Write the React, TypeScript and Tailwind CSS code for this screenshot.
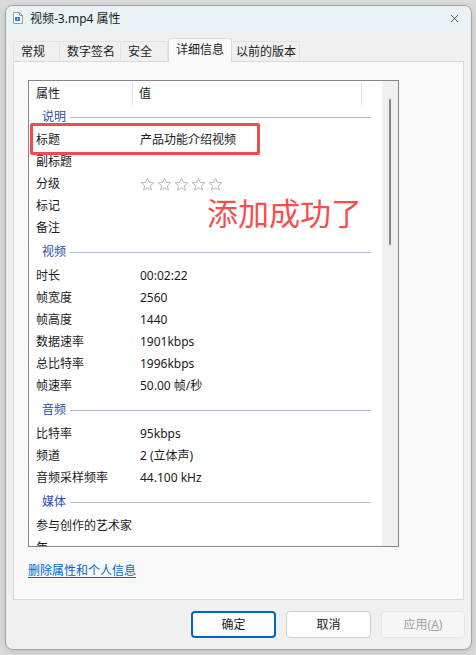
import { X } from 'lucide-react';

type Row = [string, string];

interface Section {
    name: string;
    rows: Row[];
}

const sections: Section[] = [
    {
        name: '说明',
        rows: [
            ['标题', '产品功能介绍视频'],
            ['副标题', ''],
            ['分级', '*'],
            ['标记', ''],
            ['备注', ''],
        ],
    },
    {
        name: '视频',
        rows: [
            ['时长', '00:02:22'],
            ['帧宽度', '2560'],
            ['帧高度', '1440'],
            ['数据速率', '1901kbps'],
            ['总比特率', '1996kbps'],
            ['帧速率', '50.00 帧/秒'],
        ],
    },
    {
        name: '音频',
        rows: [
            ['比特率', '95kbps'],
            ['频道', '2 (立体声)'],
            ['音频采样频率', '44.100 kHz'],
        ],
    },
    {
        name: '媒体',
        rows: [
            ['参与创作的艺术家', ''],
            ['年', ''],
        ],
    },
];

const tabs = [
    { name: '常规', width: 'w-[47px]' },
    { name: '数字签名', width: 'w-[61px]' },
    { name: '安全', width: 'w-[47px]' },
    { name: '详细信息', width: 'w-[64px]', active: true },
    { name: '以前的版本', width: 'w-[68px]' },
];

function FileIcon() {
    return (
        <svg width="10" height="12" viewBox="0 0 10 12">
            <path d="M0.5 0.5 H6.5 L9.5 3.5 V11.5 H0.5 Z" fill="#fff" stroke="#9a9a9a" />
            <path d="M6.5 0.5 V3.5 H9.5" fill="none" stroke="#9a9a9a" />
            <rect x="2" y="5" width="5" height="4" rx="0.5" fill="#2a7fd4" />
            <path d="M4 6 L5.6 7 L4 8 Z" fill="#fff" />
        </svg>
    );
}

function Stars() {
    return (
        <div className="flex gap-[2px]">
            {[0, 1, 2, 3, 4].map((i) => (
                <svg key={i} width="15" height="15" viewBox="0 0 24 24">
                    <path
                        d="M12 2 L14.9 8.6 L22 9.3 L16.6 14 L18.2 21 L12 17.3 L5.8 21 L7.4 14 L2 9.3 L9.1 8.6 Z"
                        fill="none"
                        stroke="#b5b5b5"
                        strokeWidth="1.5"
                        strokeLinejoin="round"
                    />
                </svg>
            ))}
        </div>
    );
}

function PropertyList() {
    return (
        <div className="relative h-[467px] w-[371px] border border-[#82878f] bg-white flex overflow-hidden">
            <div className="flex-1 flex flex-col">
                {/* column header */}
                <div className="h-[24px] flex shrink-0 pt-[2px]">
                    <div className="w-[104px] pl-[7px] flex items-center border-r border-[#e5e5e5]">属性</div>
                    <div className="w-[229px] pl-[6px] flex items-center border-r border-[#e5e5e5]">值</div>
                </div>
                {sections.map((section, si) => (
                    <div key={section.name} className="flex flex-col shrink-0">
                        <div className={`${si === 0 ? 'h-[24px]' : 'h-[26px]'} flex items-center pl-[13px] pr-[11px]`}>
                            <span className="text-[#1f4fa5]">{section.name}</span>
                            <div className="flex-1 h-px bg-[#a9bfe4] ml-[4px]" />
                        </div>
                        {section.rows.map(([label, value]) => (
                            <div key={label} className="h-[22px] flex items-center">
                                <div className="w-[111px] pl-[7px] whitespace-nowrap">{label}</div>
                                <div className="whitespace-nowrap">{value === '*' ? <Stars /> : value}</div>
                            </div>
                        ))}
                    </div>
                ))}
            </div>
            {/* vertical scrollbar */}
            <div className="w-[16px] bg-[#f0f0f0] flex justify-center pt-[18px]">
                <div className="w-[2px] h-[146px] rounded-full bg-[#868686]" />
            </div>

            {/* highlight around the title row */}
            <div className="absolute left-[1px] top-[42px] w-[230px] h-[32px] border-[3px] border-[#f24a4e] rounded-[2px]" />
            <div className="absolute left-[178px] top-[117px] text-[31px] leading-none text-[#f5504e] whitespace-nowrap">
                添加成功了
            </div>
        </div>
    );
}

export default function App() {
    return (
        <div
            className="w-[476px] h-[655px] bg-[#dcdcdc] pt-[5px] pl-[5px] overflow-hidden text-[12px] text-[#1a1a1a]"
            style={{ fontFamily: '"Noto Sans", "Noto Sans CJK SC", sans-serif' }}
        >
            <div className="w-[467px] h-[645px] rounded-[8px] border border-[#a3a3a3] bg-[#f0f0f0] flex flex-col overflow-hidden shadow-[0_2px_8px_rgba(0,0,0,0.15)]">
                {/* title bar */}
                <div className="h-[24px] bg-[#e9f3f6] flex items-center pl-[7px] pr-[10px] shrink-0">
                    <FileIcon />
                    <span className="ml-[7px] pt-px">视频-3.mp4 属性</span>
                    <X className="ml-auto w-[13px] h-[13px] text-[#222]" strokeWidth={1.3} />
                </div>

                {/* tabs */}
                <div className="h-[31px] flex items-end pl-[7px] shrink-0">
                    {tabs.map((tab) =>
                        tab.active ? (
                            <div
                                key={tab.name}
                                className={`${tab.width} relative z-10 -mb-px h-[24px] pl-[7px] pb-[1px] flex items-center bg-[#f9f9f9] border border-b-0 border-[#dadada] rounded-t-[2px]`}
                            >
                                {tab.name}
                            </div>
                        ) : (
                            <div
                                key={tab.name}
                                className={`${tab.width} h-[20px] pl-[7px] last:pl-[4px] flex items-center border-t border-r border-[#e2e2e2] first:border-l`}
                            >
                                {tab.name}
                            </div>
                        ),
                    )}
                </div>

                {/* tab page */}
                <div className="mx-[7px] h-[539px] border border-[#dadada] bg-[#f9f9f9] flex flex-col pl-[14px] pt-[18px] shrink-0">
                    <PropertyList />
                    <a className="mt-[15px] self-start text-[#0066cc] underline underline-offset-2 cursor-pointer">
                        删除属性和个人信息
                    </a>
                </div>

                {/* dialog buttons */}
                <div className="flex justify-end gap-[10px] pr-[6px] mt-[11px]">
                    <button className="w-[85px] h-[27px] rounded-[4px] border-2 border-[#0067c0] bg-[#fdfdfd]">确定</button>
                    <button className="w-[85px] h-[27px] rounded-[4px] border border-[#d0d0d0] bg-[#fdfdfd]">取消</button>
                    <button className="w-[84px] h-[27px] rounded-[4px] border border-[#e6e6e6] bg-[#f6f6f6] text-[#a0a0a0]">
                        应用(<span className="underline">A</span>)
                    </button>
                </div>
            </div>
        </div>
    );
}
